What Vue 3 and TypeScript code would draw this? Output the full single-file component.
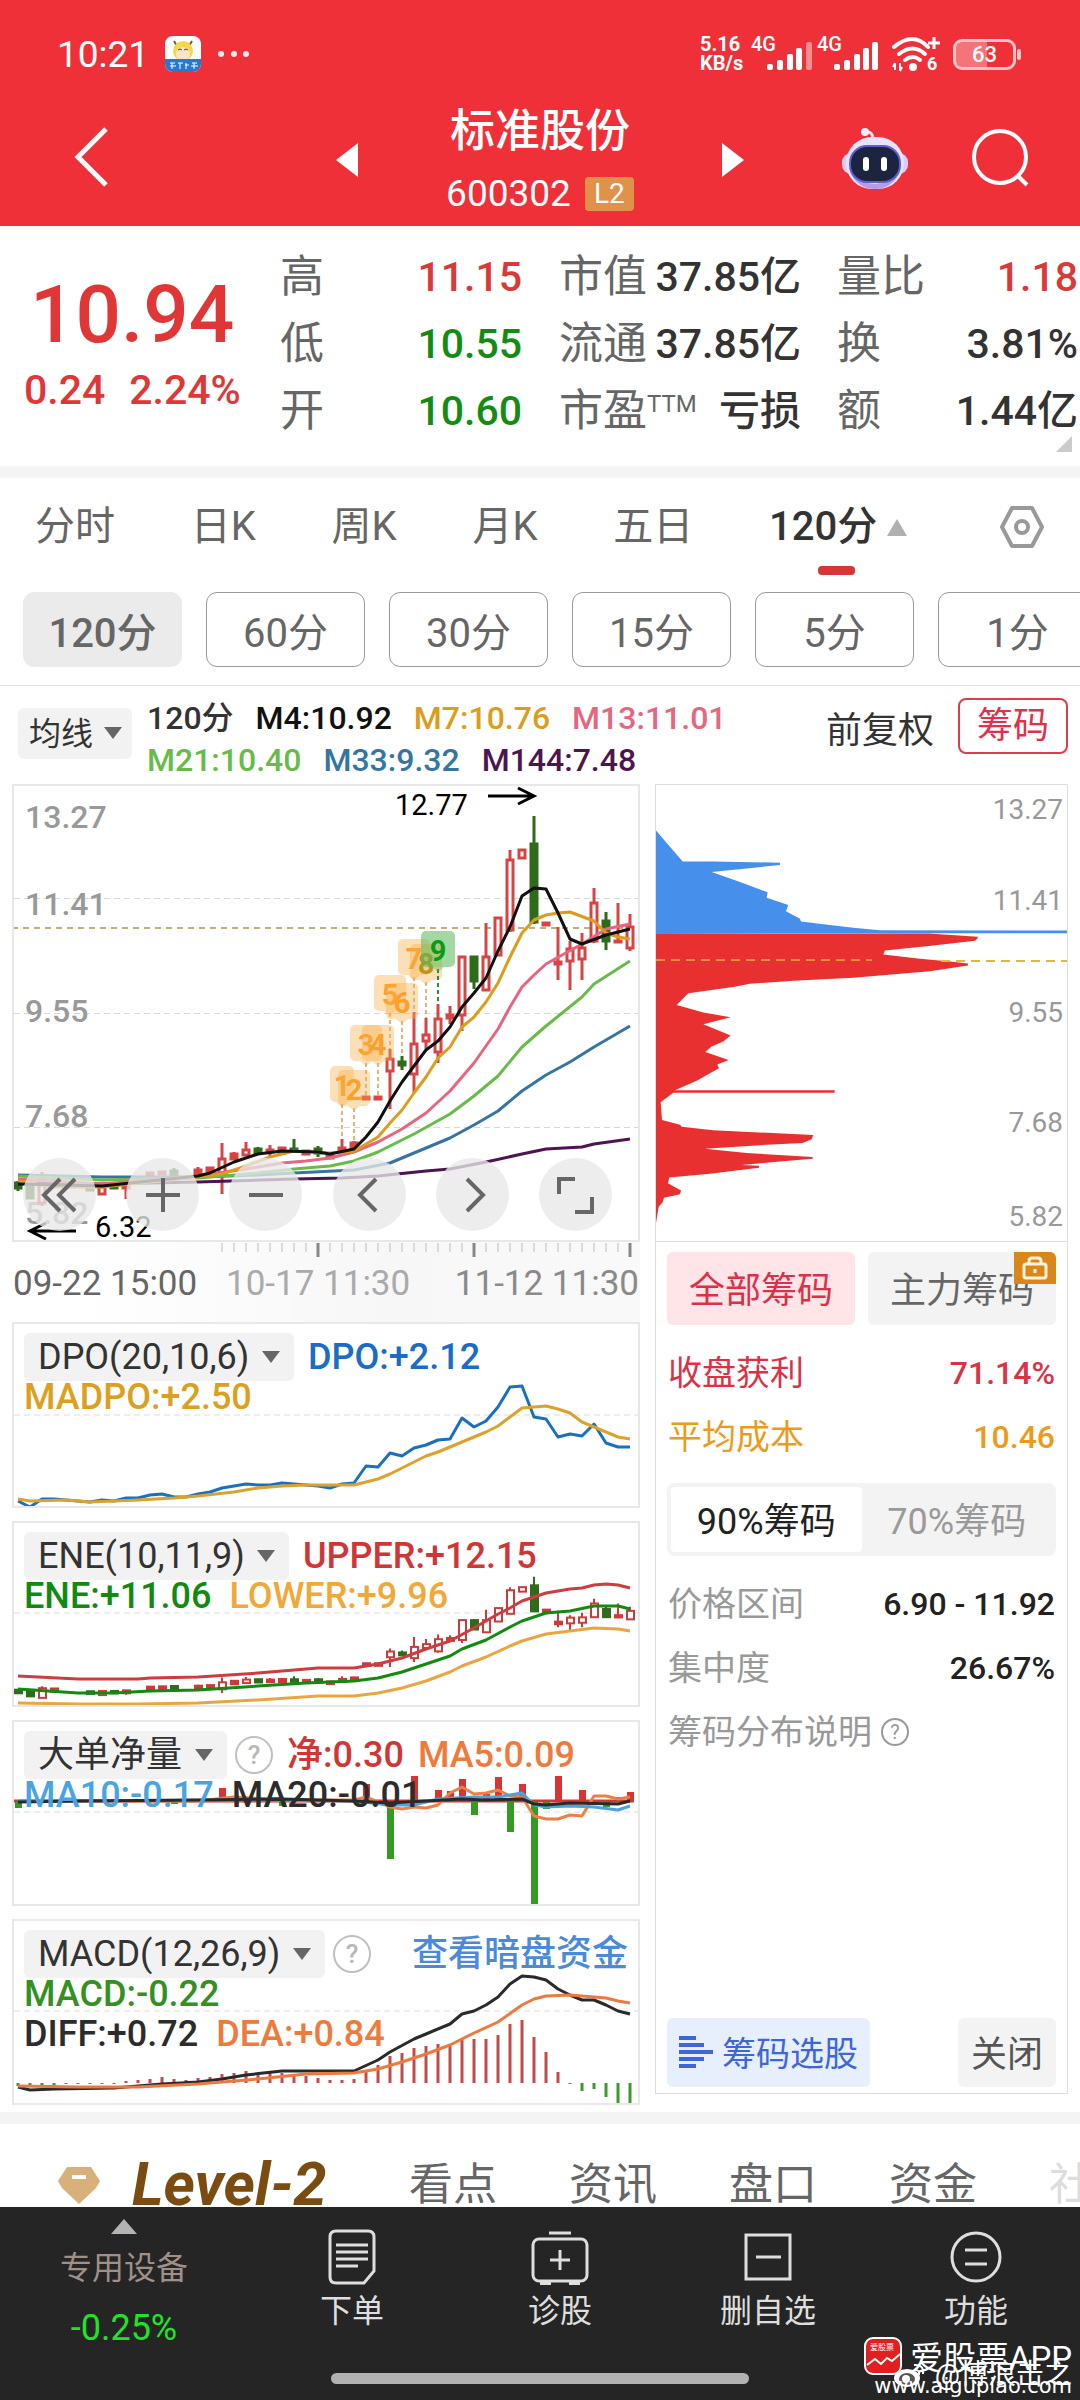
<script setup lang="ts">
type Pair = [number, number]
type Kind = 'up' | 'flat' | 'down'
// index, high, low, body top, body bottom, kind
type Candle = [number, number, number, number, number, Kind]

const slot = (i: number): number => 18 + 12 * i
const line = (pairs: Pair[]): string => pairs.map(([i, y]) => `${slot(i)},${y}`).join(' ')
const dense = (ys: number[]): string => ys.map((y, i) => `${slot(i)},${y}`).join(' ')

const quoteColumns = [
  [
    { label: '高', value: '11.15', tone: 'rise' },
    { label: '低', value: '10.55', tone: 'fall' },
    { label: '开', value: '10.60', tone: 'fall' },
  ],
  [
    { label: '市值', value: '37.85亿', tone: '' },
    { label: '流通', value: '37.85亿', tone: '' },
    { label: '市盈', sup: 'TTM', value: '亏损', tone: '' },
  ],
  [
    { label: '量比', value: '1.18', tone: 'rise' },
    { label: '换', value: '3.81%', tone: '' },
    { label: '额', value: '1.44亿', tone: '' },
  ],
]

const tabs = ['分时', '日K', '周K', '月K', '五日']
const periods = ['120分', '60分', '30分', '15分', '5分', '1分']

const averages = [
  [
    { text: '120分', color: '#333333' },
    { text: 'M4:10.92', color: '#111111' },
    { text: 'M7:10.76', color: '#dc9c1c' },
    { text: 'M13:11.01', color: '#e5667e' },
  ],
  [
    { text: 'M21:10.40', color: '#68bb4a' },
    { text: 'M33:9.32', color: '#36759f' },
    { text: 'M144:7.48', color: '#4c1450' },
  ],
]

const candles: Candle[] = [
  [0, 1181, 1191, 1183, 1188, 'down'],
  [1, 1184, 1198, 1184, 1198, 'down'],
  [2, 1172, 1206, 1178, 1203, 'up'],
  [3, 1178, 1184, 1179, 1183, 'flat'],
  [6, 1188, 1191, 1188, 1190, 'down'],
  [7, 1186, 1194, 1187, 1194, 'up'],
  [8, 1187, 1189, 1187, 1188, 'down'],
  [9, 1185, 1199, 1185, 1188, 'flat'],
  [11, 1172, 1176, 1173, 1175, 'flat'],
  [12, 1171, 1175, 1172, 1174, 'flat'],
  [13, 1168, 1175, 1171, 1175, 'down'],
  [15, 1167, 1176, 1170, 1176, 'flat'],
  [16, 1167, 1175, 1168, 1171, 'flat'],
  [17, 1143, 1194, 1159, 1175, 'up'],
  [18, 1152, 1160, 1154, 1159, 'flat'],
  [19, 1142, 1156, 1150, 1155, 'up'],
  [20, 1147, 1154, 1149, 1153, 'down'],
  [21, 1145, 1157, 1150, 1152, 'flat'],
  [22, 1147, 1153, 1148, 1153, 'flat'],
  [23, 1139, 1152, 1149, 1151, 'down'],
  [24, 1150, 1155, 1151, 1154, 'flat'],
  [25, 1146, 1157, 1149, 1153, 'down'],
  [26, 1155, 1158, 1156, 1158, 'flat'],
  [27, 1139, 1152, 1148, 1151, 'flat'],
  [28, 1141, 1149, 1143, 1148, 'flat'],
  [29, 1097, 1099, 1097, 1099, 'flat'],
  [30, 1097, 1099, 1097, 1099, 'flat'],
  [31, 1049, 1109, 1059, 1071, 'up'],
  [32, 1056, 1070, 1062, 1065, 'down'],
  [33, 1012, 1093, 1044, 1074, 'up'],
  [34, 1018, 1049, 1035, 1041, 'up'],
  [35, 1004, 1063, 1019, 1052, 'up'],
  [36, 1006, 1024, 1015, 1018, 'flat'],
  [37, 956, 1031, 957, 1015, 'up'],
  [38, 956, 989, 957, 981, 'down'],
  [39, 923, 991, 957, 990, 'up'],
  [40, 917, 956, 918, 955, 'up'],
  [41, 850, 932, 860, 930, 'up'],
  [42, 849, 859, 850, 858, 'up'],
  [43, 816, 924, 844, 922, 'down'],
  [44, 923, 925, 923, 925, 'flat'],
  [45, 927, 980, 962, 964, 'flat'],
  [46, 941, 990, 949, 961, 'up'],
  [47, 933, 980, 948, 959, 'up'],
  [48, 888, 943, 903, 941, 'up'],
  [49, 912, 950, 921, 941, 'down'],
  [50, 903, 943, 941, 942, 'flat'],
  [51, 914, 951, 927, 948, 'up'],
]
const shrink = (y: number): number => 1585 + (y - 843) * 0.308
const eneCandles: Candle[] = candles.map(([i, h, l, t, b, k]) => [i, shrink(h), shrink(l), shrink(t), shrink(b) + 2, k])

const maLines: { color: string; pairs: Pair[] }[] = [
  { color: '#4c1450', pairs: [[0, 1183], [7, 1184], [15, 1182], [23, 1179], [27, 1178], [30, 1176], [34, 1171], [36, 1169], [39, 1162], [42, 1154], [44, 1149], [47, 1147], [48, 1144], [51, 1139]] },
  { color: '#36759f', pairs: [[0, 1175], [7, 1177], [15, 1177], [20, 1175], [23, 1173], [28, 1170], [31, 1163], [33, 1153], [36, 1138], [38, 1125], [40, 1111], [42, 1091], [44, 1075], [46, 1062], [48, 1047], [51, 1026]] },
  { color: '#68bb4a', pairs: [[0, 1176], [7, 1180], [15, 1178], [20, 1173], [23, 1169], [26, 1166], [28, 1161], [30, 1152], [33, 1134], [36, 1114], [38, 1096], [40, 1076], [42, 1047], [44, 1026], [47, 997], [48, 984], [51, 961]] },
  { color: '#e5667e', pairs: [[0, 1179], [7, 1184], [15, 1176], [19, 1169], [22, 1163], [24, 1161], [26, 1158], [28, 1152], [30, 1142], [32, 1129], [34, 1113], [36, 1091], [38, 1063], [40, 1029], [41, 1007], [42, 987], [43, 975], [44, 964], [47, 944], [49, 929], [51, 924]] },
  { color: '#dc9c1c', pairs: [[0, 1181], [3, 1187], [7, 1187], [15, 1177], [17, 1174], [19, 1166], [21, 1157], [23, 1151], [26, 1153], [28, 1151], [30, 1137], [31, 1123], [32, 1110], [33, 1093], [34, 1077], [35, 1058], [36, 1047], [37, 1027], [38, 1017], [39, 1002], [40, 983], [41, 957], [42, 933], [43, 920], [44, 915], [45, 913], [46, 912], [48, 921], [49, 933], [50, 937], [51, 939]] },
  { color: '#111111', pairs: [[0, 1184], [7, 1186], [15, 1176], [16, 1173], [18, 1162], [20, 1154], [22, 1151], [25, 1152], [26, 1154], [28, 1149], [29, 1137], [30, 1122], [31, 1101], [32, 1082], [34, 1050], [35, 1041], [36, 1027], [37, 1007], [38, 993], [39, 978], [40, 951], [41, 927], [42, 896], [43, 888], [44, 889], [45, 913], [46, 939], [47, 944], [49, 935], [51, 929]] },
]

const counts = [
  { n: 1, x: 342, top: 1066, end: 1139, half: 12 },
  { n: 2, x: 354, top: 1070, end: 1141, half: 16 },
  { n: 3, x: 366, top: 1025, end: 1096, half: 16 },
  { n: 4, x: 378, top: 1025, end: 1096, half: 16 },
  { n: 5, x: 390, top: 975, end: 1049, half: 16 },
  { n: 6, x: 402, top: 983, end: 1056, half: 16 },
  { n: 7, x: 414, top: 939, end: 1012, half: 16 },
  { n: 8, x: 426, top: 944, end: 1018, half: 16 },
  { n: 9, x: 438, top: 931, end: 1004, half: 17 },
]

const priceLabels = [
  { text: '13.27', y: 828, side: 819 },
  { text: '11.41', y: 915, side: 910 },
  { text: '9.55', y: 1022, side: 1022 },
  { text: '7.68', y: 1127, side: 1132 },
  { text: '5.82', y: 1224, side: 1226 },
]

const ticks = Array.from({ length: 35 }, (_, k) => slot(17 + k))
const isMajor = (x: number): boolean => [318, 474, 630].includes(x)

const dpo = dense([1501, 1507, 1499, 1499, 1500, 1501, 1502, 1500, 1501, 1498, 1498, 1495, 1494, 1497, 1497, 1494, 1492, 1488, 1486, 1484, 1485, 1485, 1483, 1484, 1485, 1486, 1488, 1484, 1483, 1466, 1467, 1453, 1456, 1448, 1445, 1440, 1439, 1418, 1427, 1421, 1407, 1387, 1386, 1417, 1419, 1437, 1434, 1436, 1424, 1443, 1447, 1447])
const madpo = line([[0, 1499], [1, 1501], [4, 1500], [6, 1502], [10, 1500], [13, 1498], [15, 1496], [18, 1492], [20, 1488], [22, 1486], [24, 1485], [28, 1485], [29, 1482], [30, 1479], [31, 1474], [32, 1468], [33, 1462], [34, 1456], [35, 1452], [36, 1447], [37, 1442], [38, 1437], [39, 1432], [40, 1426], [41, 1417], [42, 1408], [43, 1407], [44, 1406], [45, 1409], [46, 1413], [47, 1422], [48, 1427], [49, 1432], [50, 1437], [51, 1439]])

const upper = line([[0, 1676], [5, 1679], [10, 1679], [11, 1678], [15, 1677], [20, 1673], [25, 1668], [28, 1668], [30, 1664], [32, 1658], [34, 1649], [36, 1641], [38, 1628], [40, 1614], [41, 1608], [42, 1601], [43, 1597], [44, 1593], [46, 1589], [47, 1588], [48, 1585], [49, 1584], [50, 1585], [51, 1588]])
const ene = line([[0, 1689], [5, 1693], [8, 1693], [11, 1691], [15, 1690], [20, 1686], [24, 1683], [28, 1681], [30, 1678], [32, 1672], [34, 1664], [36, 1656], [37, 1649], [39, 1640], [41, 1627], [42, 1621], [44, 1613], [46, 1611], [48, 1606], [50, 1606], [51, 1609]])
const lower = line([[0, 1703], [5, 1704], [10, 1704], [15, 1703], [20, 1700], [25, 1696], [28, 1696], [30, 1693], [32, 1688], [34, 1681], [36, 1672], [37, 1666], [39, 1657], [41, 1646], [42, 1641], [44, 1634], [46, 1631], [48, 1628], [50, 1629], [51, 1631]])

const netUp: Pair[] = [[17, 1788], [29, 1784], [33, 1776], [35, 1790], [36, 1791], [37, 1779], [39, 1794], [40, 1777], [42, 1784], [45, 1776], [47, 1790], [50, 1797], [51, 1792]]
const netDown: Pair[] = [[0, 1808], [13, 1804], [22, 1806], [31, 1859], [38, 1815], [41, 1832], [43, 1905], [44, 1809], [48, 1805], [49, 1807]]
const net5 = line([[0, 1801], [15, 1801], [18, 1797], [22, 1800], [28, 1800], [29, 1797], [31, 1807], [32, 1809], [33, 1807], [34, 1808], [35, 1805], [36, 1793], [37, 1787], [38, 1794], [39, 1793], [40, 1790], [41, 1796], [42, 1797], [43, 1816], [44, 1819], [45, 1819], [46, 1815], [47, 1816], [48, 1796], [49, 1796], [50, 1799], [51, 1797]])
const net10 = line([[0, 1801], [20, 1800], [28, 1801], [31, 1805], [33, 1805], [35, 1799], [38, 1797], [40, 1797], [42, 1793], [43, 1805], [44, 1807], [46, 1806], [48, 1807], [50, 1810], [51, 1806]])
const net20 = line([[0, 1802], [5, 1801], [15, 1800], [22, 1799], [28, 1801], [31, 1803], [34, 1801], [37, 1799], [39, 1800], [42, 1799], [43, 1804], [44, 1805], [46, 1803], [50, 1804], [51, 1801]])

const macdBars: number[] = [2086, 2087, 2086, 2086, 2084, 2084, 2084, 2084, 2084, 2081, 2080, 2079, 2077, 2079, 2080, 2078, 2077, 2074, 2073, 2071, 2074, 2073, 2073, 2076, 2076, 2078, 2080, 2080, 2079, 2072, 2065, 2056, 2053, 2048, 2046, 2044, 2045, 2038, 2039, 2039, 2035, 2024, 2020, 2037, 2052, 2072, 2084, 2091, 2089, 2097, 2104, 2104]
const diff = line([[0, 2087], [1, 2090], [3, 2089], [8, 2088], [10, 2086], [12, 2084], [15, 2082], [17, 2079], [19, 2075], [22, 2071], [28, 2071], [30, 2060], [31, 2052], [33, 2039], [34, 2034], [36, 2024], [37, 2014], [38, 2011], [39, 2005], [40, 1997], [41, 1984], [42, 1976], [43, 1977], [44, 1980], [45, 1989], [46, 1995], [47, 2000], [48, 2000], [49, 2005], [50, 2011], [51, 2014]])
const dea = line([[0, 2086], [5, 2087], [10, 2087], [15, 2084], [20, 2079], [24, 2074], [28, 2073], [30, 2069], [32, 2062], [34, 2054], [36, 2045], [38, 2033], [40, 2022], [42, 2005], [43, 1999], [44, 1996], [46, 1995], [48, 1997], [49, 1998], [50, 2001], [51, 2003]])

const sections = ['看点', '资讯', '盘口', '资金', '社区']
</script>

<template>
  <div class="app">
    <header class="top">
      <div class="status">
        <span class="clock">10:21</span>
        <svg class="appicon" viewBox="0 0 36 36" width="36" height="36">
          <rect width="36" height="36" rx="8" fill="#fff" />
          <path d="M9 5l3 5M27 5l-3 5" stroke="#7a5a20" stroke-width="2" />
          <circle cx="18" cy="15" r="10" fill="#f3d84a" />
          <ellipse cx="18" cy="18" rx="7" ry="7" fill="#fbe3c4" />
          <path d="M13 14q2-2 4 0M19 14q2-2 4 0" stroke="#444" fill="none" />
          <path d="M0 23h36v5a8 8 0 0 1-8 8H8a8 8 0 0 1-8-8z" fill="#2878d0" />
          <path d="M5 27h5M7 27v6M5 30h6M13 27h5M15 27v6M21 27v6M20 29h4M27 27h5M29 27v6M26 30h7" stroke="#fff" />
        </svg>
        <svg class="dots" viewBox="0 0 34 8" width="34" height="8"><g fill="#ffe9e9"><circle cx="4" cy="4" r="3" /><circle cx="17" cy="4" r="3" /><circle cx="29" cy="4" r="3" /></g></svg>
        <span class="speed">5.16<br />KB/s</span>
        <svg class="signals" viewBox="0 -4 128 44" width="128" height="44">
          <text x="0" y="15" class="sig">4G</text>
          <text x="66" y="15" class="sig">4G</text>
          <g fill="#fff">
            <rect x="16" y="28" width="6" height="6" rx="2" /><rect x="26" y="24" width="6" height="10" rx="2" /><rect x="36" y="18" width="6" height="16" rx="2" /><rect x="45" y="12" width="6" height="22" rx="2" /><rect x="55" y="6" width="6" height="28" rx="2" opacity=".45" />
            <rect x="83" y="28" width="6" height="6" rx="2" /><rect x="93" y="24" width="6" height="10" rx="2" /><rect x="103" y="18" width="6" height="16" rx="2" /><rect x="112" y="12" width="6" height="22" rx="2" /><rect x="121" y="6" width="6" height="28" rx="2" />
          </g>
        </svg>
        <svg class="wifi" viewBox="0 -4 50 44" width="50" height="44">
          <g fill="none" stroke="#fff" stroke-width="4" stroke-linecap="round"><path d="M3 11q19-16 34 0" /><path d="M8 18q14-11 26 0" /><path d="M14 24q8-6 15 0" /></g>
          <circle cx="22" cy="31" r="4" fill="#fff" />
          <path d="M37 7h12M43 1v12" stroke="#fff" stroke-width="3" />
          <path d="M4 34v-7M9 27v8M2 31l2-4M11 31l-2 4" stroke="#fff" stroke-width="2" />
          <text x="36" y="34" class="wifi-six">6</text>
        </svg>
        <span class="battery"><span>63</span></span>
      </div>
      <div class="nav">
        <button class="icon back" aria-label="返回"><svg viewBox="0 0 36 62" width="36" height="62"><path d="M32 3L4 31l28 28" fill="none" stroke="#fff" stroke-width="5" /></svg></button>
        <div class="title">
          <button class="icon" aria-label="上一只"><svg viewBox="0 0 22 34" width="22" height="34"><path d="M22 0v34L0 17z" fill="#fff" /></svg></button>
          <div class="names">
            <h1>标准股份</h1>
            <div class="code">600302 <span class="l2">L2</span></div>
          </div>
          <button class="icon" aria-label="下一只"><svg viewBox="0 0 22 34" width="22" height="34"><path d="M0 0v34l22-17z" fill="#fff" /></svg></button>
        </div>
        <div class="nav-end">
          <button class="icon" aria-label="智能助手">
            <svg viewBox="0 0 66 62" width="66" height="62">
              <path d="M22 4q9-2 9 8" fill="none" stroke="#f0dcf0" stroke-width="3" /><circle cx="23" cy="4" r="4" fill="#f6ecff" />
              <rect x="0" y="25" width="66" height="21" rx="9" fill="#d9cdf8" />
              <rect x="4" y="9" width="58" height="52" rx="26" fill="#e8e2fc" />
              <path d="M8 44q25 24 50 0q-8 17-25 17T8 44z" fill="#b79be8" />
              <rect x="8" y="18" width="50" height="36" rx="17" fill="#1c2440" stroke="#5a5fd0" stroke-width="2" />
              <rect x="21" y="29" width="6" height="14" rx="3" fill="#fff" /><rect x="39" y="29" width="6" height="14" rx="3" fill="#fff" />
            </svg>
          </button>
          <button class="icon" aria-label="搜索"><svg viewBox="0 0 60 60" width="60" height="60"><circle cx="29" cy="29" r="26" fill="none" stroke="#fff" stroke-width="4" /><path d="M47 48l9 9" stroke="#fff" stroke-width="4" /></svg></button>
        </div>
      </div>
    </header>

    <main class="content">
      <section class="quote">
        <div class="price">
          <strong>10.94</strong>
          <div class="change"><span>0.24</span><span>2.24%</span></div>
        </div>
        <dl v-for="(col, c) in quoteColumns" :key="c">
          <div v-for="q in col" :key="q.label">
            <dt>{{ q.label }}<sup v-if="q.sup">{{ q.sup }}</sup></dt>
            <dd :class="q.tone">{{ q.value }}</dd>
          </div>
        </dl>
        <svg class="corner" viewBox="0 0 16 16" width="16" height="16"><path d="M16 0v16H0z" fill="#ccc" /></svg>
      </section>

      <nav class="tabs">
        <button v-for="t in tabs" :key="t">{{ t }}</button>
        <button class="active">120分<svg viewBox="0 0 20 17" width="20" height="17"><path d="M10 0l10 17H0z" fill="#b0b0b0" /></svg></button>
        <button class="gear" aria-label="设置"><svg viewBox="0 0 46 44" width="46" height="44"><path d="M13 3h20l10 19-10 19H13L3 22z" fill="none" stroke="#999" stroke-width="4" stroke-linejoin="round" /><circle cx="23" cy="22" r="6" fill="none" stroke="#999" stroke-width="4" /></svg></button>
      </nav>

      <div class="periods">
        <button v-for="(p, k) in periods" :key="p" :class="{ on: k === 0 }">{{ p }}</button>
      </div>

      <div class="legend">
        <div class="pick"><select aria-label="均线"><option>均线</option></select></div>
        <div class="averages">
          <div v-for="(row, r) in averages" :key="r"><span v-for="m in row" :key="m.text" :style="{ color: m.color }">{{ m.text }}</span></div>
        </div>
        <button class="adjust">前复权</button>
        <button class="chips-btn">筹码</button>
      </div>

      <section class="board">
        <div class="left">
          <div class="frame main-chart">
            <svg viewBox="14 786 624 454">
              <g stroke="#d8d8d8" stroke-width="1" stroke-dasharray="6 4"><path d="M14 898.5H638M14 1013.5H638M14 1127.5H638" /></g>
              <path d="M12 928H638" stroke="#c0b07c" stroke-width="2" stroke-dasharray="6 5" />
              <text v-for="p in priceLabels" :key="p.text" x="25" :y="p.y" class="axis">{{ p.text }}</text>
              <g v-for="c in candles" :key="c[0]" :stroke="c[5] === 'down' ? '#2f6b1a' : '#d64545'" stroke-width="3">
                <path :d="`M${slot(c[0])} ${c[1]}V${c[3]}M${slot(c[0])} ${c[4]}V${c[2]}`" />
                <rect :x="slot(c[0]) - 3" :y="c[3]" width="6" :height="c[4] - c[3]" :fill="c[5] === 'up' ? '#fff' : c[5] === 'down' ? '#2f6b1a' : '#d64545'" />
              </g>
              <polyline v-for="m in maLines" :key="m.color" :points="line(m.pairs)" class="curve" :stroke="m.color" />
              <g v-for="b in counts" :key="b.n">
                <path :d="`M${b.x} ${b.top + 38}V${b.end}`" :stroke="b.n === 9 ? '#2c8a3a' : '#dcb878'" stroke-width="2" stroke-dasharray="4 3" />
                <rect :x="b.x - b.half" :y="b.top" :width="b.half * 2" height="36" rx="5" :fill="b.n === 9 ? '#58b858' : '#fbb04c'" :opacity="b.n === 9 ? 0.55 : 0.4" />
                <path :d="`M${b.x - 6} ${b.top + 36}h12l-6 5z`" :fill="b.n === 9 ? '#58b858' : '#fbb04c'" opacity=".4" />
                <text :x="b.x" :y="b.top + 30" text-anchor="middle" class="count" :fill="b.n === 9 ? '#0a9a14' : b.n === 8 ? '#b8961c' : '#f9a12a'">{{ b.n }}</text>
              </g>
              <text x="395" y="815" class="mark">12.77</text>
              <path d="M488 796h46M518 788l16 8-16 8" fill="none" stroke="#000" stroke-width="3" />
              <text x="95" y="1237" class="mark">6.32</text>
              <path d="M76 1231H30M46 1223l-16 8 16 8" fill="none" stroke="#000" stroke-width="3" />
            </svg>
            <div class="tools">
              <button aria-label="最早"><svg viewBox="0 0 40 40"><path d="M20 4L4 20l16 16M35 4L19 20l16 16" /></svg></button>
              <button aria-label="放大"><svg viewBox="0 0 40 40"><path d="M3 20h34M20 3v34" /></svg></button>
              <button aria-label="缩小"><svg viewBox="0 0 40 40"><path d="M3 20h34" /></svg></button>
              <button aria-label="左移"><svg viewBox="0 0 40 40"><path d="M27 4L11 20l16 16" /></svg></button>
              <button aria-label="右移"><svg viewBox="0 0 40 40"><path d="M15 4l16 16-16 16" /></svg></button>
              <button aria-label="全屏"><svg viewBox="0 0 40 40"><path d="M4 19V4h16M20 37h17V22" /></svg></button>
            </div>
          </div>

          <svg class="timeline" viewBox="12 1241 628 80">
            <path v-for="x in ticks" :key="x" :d="`M${x} 1242V${isMajor(x) ? 1256 : 1251}`" :stroke="isMajor(x) ? '#888' : '#bbb'" :stroke-width="isMajor(x) ? 3 : 1" />
            <text x="13" y="1294" fill="#666">09-22 15:00</text>
            <text x="226" y="1294" fill="#aaa">10-17 11:30</text>
            <text x="639" y="1294" text-anchor="end" fill="#8a8a8a">11-12 11:30</text>
          </svg>

          <div class="frame sub">
            <svg viewBox="14 1324 624 182">
              <path d="M14 1415H638" class="mid" />
              <polyline :points="dpo" stroke="#1a6fc0" class="curve" />
              <polyline :points="madpo" stroke="#dba22e" class="curve" />
            </svg>
            <div class="info">
              <div class="row head"><div class="pick"><select aria-label="指标 DPO"><option>DPO(20,10,6)</option></select></div><span class="blue">DPO:+2.12</span></div>
              <div class="row"><span class="gold">MADPO:+2.50</span></div>
            </div>
          </div>

          <div class="frame sub">
            <svg viewBox="14 1523 624 182">
              <path d="M14 1613H638" class="mid" />
              <g v-for="c in eneCandles" :key="c[0]" :stroke="c[5] === 'down' ? '#2f6b1a' : '#cc3a3a'" stroke-width="2">
                <path :d="`M${slot(c[0])} ${c[1]}V${c[3]}M${slot(c[0])} ${c[4]}V${c[2]}`" />
                <rect :x="slot(c[0]) - 3" :y="c[3]" width="7" :height="c[4] - c[3]" :fill="c[5] === 'up' ? '#fff' : c[5] === 'down' ? '#2f6b1a' : '#cc3a3a'" />
              </g>
              <polyline :points="upper" stroke="#cc3c40" class="curve" />
              <polyline :points="ene" stroke="#128a12" class="curve" />
              <polyline :points="lower" stroke="#e8a640" class="curve" />
            </svg>
            <div class="info">
              <div class="row head"><div class="pick"><select aria-label="指标 ENE"><option>ENE(10,11,9)</option></select></div><span class="red">UPPER:+12.15</span></div>
              <div class="row"><span class="green">ENE:+11.06</span><span class="amber">LOWER:+9.96</span></div>
            </div>
          </div>

          <div class="frame sub">
            <svg viewBox="14 1722 624 182">
              <path d="M14 1812H638" class="mid" />
              <path d="M14 1801H634" stroke="#d83434" stroke-width="3" />
              <rect v-for="b in netUp" :key="b[0]" :x="slot(b[0]) - 3" :y="b[1]" width="7" :height="1802 - b[1]" fill="#d83434" />
              <rect v-for="b in netDown" :key="b[0]" :x="slot(b[0]) - 3" y="1802" width="7" :height="b[1] - 1802" fill="#349a22" />
              <polyline :points="net5" stroke="#ec8048" class="curve" />
              <polyline :points="net10" stroke="#4da3dc" class="curve" />
              <polyline :points="net20" stroke="#2a2a2a" class="curve" />
            </svg>
            <div class="info">
              <div class="row head"><div class="pick"><select aria-label="指标 大单净量"><option>大单净量</option></select></div><button class="help" aria-label="说明">?</button><span class="red">净:0.30</span><span class="orange">MA5:0.09</span></div>
              <div class="row"><span class="sky">MA10:-0.17</span><span class="ink">MA20:-0.01</span></div>
            </div>
          </div>

          <div class="frame sub">
            <svg viewBox="14 1921 624 182">
              <path d="M14 2011H638" class="mid" />
              <path v-for="(y, i) in macdBars" :key="i" :d="`M${slot(i)} 2083V${y}`" :stroke="y > 2083 ? '#3a9a2a' : '#c44a4a'" stroke-width="3" />
              <polyline :points="diff" stroke="#2a2a2a" class="curve" />
              <polyline :points="dea" stroke="#ec7a40" class="curve" />
            </svg>
            <div class="info">
              <div class="row head"><div class="pick"><select aria-label="指标 MACD"><option>MACD(12,26,9)</option></select></div><button class="help" aria-label="说明">?</button><a href="#dark" class="more">查看暗盘资金</a></div>
              <div class="row"><span class="leaf">MACD:-0.22</span></div>
              <div class="row"><span class="ink">DIFF:+0.72</span><span class="orange">DEA:+0.84</span></div>
            </div>
          </div>
        </div>

        <aside class="right">
          <svg class="spread" viewBox="656 785 411 456">
            <g transform="translate(640 770) scale(0.3333 0.3444)">
              <polygon fill="#468fea" points="48,176 128,266 220,266 420,269 420,276 215,296 300,325 383,355 380,371 445,392 438,410 480,432 483,440 550,448 640,458 720,465 1281,466 1281,474 48,474" />
              <polygon fill="#e93030" points="48,474 865,475 1014,484 1012,490 1005,496 860,512 735,524 730,536 840,548 930,556 984,562 984,568 870,584 640,603 460,612 330,621 280,630 145,648 110,682 190,704 272,718 190,738 272,771 250,788 215,803 196,819 266,842 232,855 237,866 170,902 105,930 584,930 584,937 100,937 62,965 66,1016 120,1030 125,1036 220,1046 520,1060 515,1072 488,1083 380,1088 195,1100 320,1112 518,1124 518,1129 385,1140 305,1147 357,1149 357,1155 210,1172 88,1183 84,1200 123,1221 120,1232 72,1242 68,1255 56,1268 48,1315" />
            </g>
            <path d="M656 960H872" stroke="#f08c3c" stroke-width="2" stroke-dasharray="9 6" />
            <path d="M941 961H1067" stroke="#e0b83c" stroke-width="2" stroke-dasharray="9 6" />
            <text v-for="p in priceLabels" :key="p.text" x="1063" :y="p.side" text-anchor="end">{{ p.text }}</text>
          </svg>
          <div class="detail">
            <div class="scope">
              <button class="on">全部筹码</button>
              <button>主力筹码<span class="lock"><svg viewBox="0 0 42 32" width="42" height="32"><rect x="10" y="12" width="22" height="14" rx="2" fill="none" stroke="#fff3dc" stroke-width="3" /><path d="M15 12V9q0-3 3-3h6q3 0 3 3v3M21 17v4" fill="none" stroke="#fff3dc" stroke-width="3" /></svg></span></button>
            </div>
            <dl class="facts">
              <div class="rose"><dt>收盘获利</dt><dd>71.14%</dd></div>
              <div class="honey"><dt>平均成本</dt><dd>10.46</dd></div>
            </dl>
            <div class="toggle"><button class="on">90%筹码</button><button>70%筹码</button></div>
            <dl class="facts">
              <div><dt>价格区间</dt><dd>6.90 - 11.92</dd></div>
              <div><dt>集中度</dt><dd>26.67%</dd></div>
              <div><dt>筹码分布说明 <button class="help small" aria-label="说明">?</button></dt></div>
            </dl>
            <div class="actions">
              <button class="choose"><svg viewBox="0 0 34 32" width="34" height="32"><path d="M0 2h17M0 9h25M0 16h34M0 23h25M0 30h17" stroke="#3f66d8" stroke-width="4" /></svg>筹码选股</button>
              <button class="close">关闭</button>
            </div>
          </div>
        </aside>
      </section>

      <nav class="sections">
        <a href="#level2" class="level"><svg viewBox="0 0 42 37" width="42" height="37"><path d="M9 0h24l9 14-4 7-17 16L4 21l-4-7z" fill="#d8b07a" /><rect x="14" y="8" width="14" height="4" fill="#fff" /></svg><em>Level-2</em></a>
        <a v-for="s in sections" :key="s" href="#section">{{ s }}</a>
      </nav>
    </main>

    <footer class="bottom">
      <div class="bar">
        <button class="device"><svg viewBox="0 0 26 15" width="26" height="15"><path d="M13 0l13 15H0z" fill="#b4b4b4" /></svg><span>专用设备</span><b>-0.25%</b></button>
        <button><svg viewBox="0 0 60 56" width="60" height="56"><g fill="none" stroke="#dedede" stroke-width="3"><path d="M14 2h32q6 0 6 6v34L42 54H14q-6 0-6-6V8q0-6 6-6z" /><path d="M14 16h32M14 23h32M14 30h32M14 37h22" /></g></svg>下单</button>
        <button><svg viewBox="0 0 60 56" width="60" height="56"><g fill="none" stroke="#dedede" stroke-width="3"><rect x="3" y="10" width="54" height="42" rx="6" /><path d="M19 4h22M30 21v20M20 31h20" /><path d="M10 54h11M39 54h11" stroke-width="4" /></g></svg>诊股</button>
        <button><svg viewBox="0 0 60 56" width="60" height="56"><g fill="none" stroke="#dedede" stroke-width="3"><rect x="8" y="6" width="44" height="44" /><path d="M18 28h25" /></g></svg>删自选</button>
        <button><svg viewBox="0 0 60 56" width="60" height="56"><g fill="none" stroke="#dedede" stroke-width="3"><circle cx="30" cy="28" r="24" /><path d="M19 21h22M19 35h22" /></g></svg>功能</button>
      </div>
      <div class="home"></div>
      <div class="stamp">
        <div class="brand">
          <svg viewBox="0 0 38 38" width="38" height="38"><rect x="1" y="1" width="36" height="36" rx="8" fill="#e02020" stroke="#fff" stroke-width="2" /><text x="6" y="13" class="brand-mini">爱股票</text><path d="M3 28l8-6 6 5 6-6 5 3 8-7" fill="none" stroke="#fff" stroke-width="2" /></svg>
          <span>爱股票APP</span>
        </div>
        <div class="user">
          <svg viewBox="0 0 34 26" width="34" height="26"><ellipse cx="14" cy="16" rx="13" ry="9" fill="#fff" /><ellipse cx="14" cy="17" rx="8" ry="6" fill="#555" /><circle cx="13" cy="17" r="4" fill="#fff" /><path d="M21 3q10-1 9 9M22 8q5 0 4 5" fill="none" stroke="#fff" stroke-width="2" /></svg>
          <span>@博浪击之</span>
        </div>
        <div class="site">www.aigupiao.com</div>
      </div>
    </footer>
  </div>
</template>

<style>
body {
  margin: 0;
  background: #fff;
}
</style>

<style scoped>
.app {
  display: flex;
  flex-direction: column;
  height: 100vh;
  overflow: hidden;
  font-family: Roboto, "Noto Sans CJK SC", sans-serif;
  color: #333;
}
button {
  padding: 0;
  border: 0;
  background: none;
  font: inherit;
  color: inherit;
}
svg {
  display: block;
  flex: none;
}
a {
  color: inherit;
  text-decoration: none;
}
dl,
dd,
h1 {
  margin: 0;
}

/* header */
.top {
  flex: none;
  height: 226px;
  background: #f03038;
  color: #fff;
}
.status {
  display: flex;
  align-items: center;
  height: 36px;
  padding: 36px 64px 0 57px;
}
.clock {
  width: 108px;
  font-size: 37px;
}
.dots {
  margin-left: 16px;
}
.speed {
  margin-left: auto;
  width: 51px;
  font-size: 20px;
  line-height: 19px;
  font-weight: 700;
}
.sig {
  font-size: 20px;
  font-weight: 500;
  fill: #fff;
}
.wifi {
  margin-left: 12px;
}
.wifi-six {
  font-size: 18px;
  font-weight: 700;
  fill: #fff;
}
.battery {
  position: relative;
  margin-left: 12px;
  width: 63px;
  height: 31px;
  box-sizing: border-box;
  border: 3px solid #fbc4c6;
  border-radius: 9px;
  background: linear-gradient(90deg, #f4747a 55%, transparent 55%);
  text-align: center;
  font-size: 22px;
  line-height: 25px;
  font-weight: 500;
}
.battery::after {
  content: "";
  position: absolute;
  right: -8px;
  top: 7px;
  width: 4px;
  height: 11px;
  border-radius: 2px;
  background: #fbc4c6;
}
.nav {
  display: grid;
  grid-template-columns: 1fr 408px 1fr;
  height: 154px;
}
.icon {
  display: block;
}
.back {
  justify-self: start;
  height: 62px;
  margin: 54px 0 0 74px;
}
.title {
  display: flex;
  align-items: flex-start;
  justify-content: space-between;
}
.title .icon {
  margin-top: 71px;
}
.names {
  display: flex;
  flex-direction: column;
  align-items: center;
  padding-top: 32px;
}
h1 {
  font-size: 45px;
  line-height: 56px;
  font-weight: 500;
}
.code {
  display: flex;
  align-items: center;
  gap: 14px;
  margin-top: 16px;
  font-size: 37px;
  line-height: 36px;
}
.l2 {
  width: 49px;
  height: 34px;
  border-radius: 4px;
  background: #e0914a;
  text-align: center;
  font-size: 28px;
  line-height: 34px;
}
.nav-end {
  display: flex;
  justify-content: flex-end;
  align-items: flex-start;
  gap: 63px;
  padding: 56px 49px 0 0;
}

/* quote */
.content {
  flex: 1;
  min-height: 0;
  overflow: hidden;
}
.quote {
  position: relative;
  display: grid;
  grid-template-columns: 256px 242px 37px 242px 36px 1fr;
  height: 240px;
  padding: 18px 2px 0 24px;
  box-sizing: border-box;
}
.quote dl:nth-of-type(2) {
  grid-column: 4;
}
.quote dl:nth-of-type(3) {
  grid-column: 6;
}
.price {
  color: #e03636;
}
.price strong {
  display: block;
  margin: 32px 0 0 6px;
  font-size: 80px;
  line-height: 78px;
  font-weight: 500;
}
.change {
  display: flex;
  gap: 24px;
  margin-top: 12px;
  font-size: 41px;
  line-height: 48px;
  font-weight: 500;
}
.quote dl > div {
  display: flex;
  justify-content: space-between;
  height: 67px;
  line-height: 67px;
}
.quote dt {
  font-size: 44px;
  color: #666;
  white-space: nowrap;
}
.quote sup {
  font-size: 24px;
  line-height: 24px;
  vertical-align: 14px;
}
.quote dd {
  font-size: 41px;
  font-weight: 500;
  white-space: nowrap;
}
.rise {
  color: #d83a3a;
}
.fall {
  color: #148c14;
}
.corner {
  position: absolute;
  right: 8px;
  bottom: 14px;
}

/* tabs */
.tabs {
  display: flex;
  align-items: center;
  justify-content: space-between;
  height: 110px;
  padding: 0 35px;
  border-top: 12px solid #f4f4f4;
  box-sizing: border-box;
  font-size: 40px;
  line-height: 98px;
  color: #666;
}
.tabs .active {
  position: relative;
  display: flex;
  align-items: center;
  gap: 10px;
  font-weight: 500;
  color: #333;
}
.tabs .active::after {
  content: "";
  position: absolute;
  left: 49px;
  bottom: 1px;
  width: 37px;
  height: 9px;
  border-radius: 4px;
  background: #d83636;
}
.gear {
  margin-left: 16px;
}
.periods {
  display: flex;
  gap: 24px;
  padding: 16px 0 18px 23px;
  border-bottom: 1px solid #e0e0e0;
  overflow: hidden;
  font-size: 40px;
  color: #666;
}
.periods button {
  flex: none;
  width: 159px;
  height: 75px;
  box-sizing: border-box;
  border: 1px solid #999;
  border-radius: 11px;
}
.periods .on {
  border-color: #ebebeb;
  background: #ebebeb;
  font-weight: 500;
}

/* moving-average legend */
.pick {
  position: relative;
  display: flex;
}
.pick select {
  appearance: none;
  height: 48px;
  margin: 0;
  padding: 0 44px 0 14px;
  border: 0;
  border-radius: 6px;
  background: #f2f2f2;
  font: inherit;
  color: #333;
}
.pick::after {
  content: "";
  position: absolute;
  right: 14px;
  top: 18px;
  border: 9px solid transparent;
  border-top: 12px solid #666;
  border-bottom: 0;
  pointer-events: none;
}
.legend {
  display: flex;
  align-items: flex-start;
  height: 98px;
  padding: 11px 12px 0 18px;
  box-sizing: border-box;
  font-size: 32px;
}
.legend .pick {
  margin-top: 11px;
}
.legend .pick select {
  height: 51px;
  padding: 0 38px 0 11px;
}
.legend .pick::after {
  right: 10px;
  top: 19px;
}
.averages {
  margin-left: 15px;
  line-height: 42px;
  font-weight: 500;
}
.averages > div {
  display: flex;
  gap: 22px;
  white-space: nowrap;
}
.adjust {
  margin: 10px 24px 0 auto;
  font-size: 36px;
  line-height: 48px;
}
.chips-btn {
  margin-top: 1px;
  width: 110px;
  height: 56px;
  border: 2px solid #dc3c4c;
  border-radius: 8px;
  font-size: 36px;
  line-height: 50px;
  color: #e0304a;
}

/* charts */
.board {
  display: grid;
  grid-template-columns: 628fr 413fr;
  column-gap: 15px;
  padding: 0 12px 7px;
}
.left {
  min-width: 0;
}
.frame {
  position: relative;
  display: grid;
  border: 2px solid #e8e8e8;
}
.frame > * {
  grid-area: 1 / 1;
  min-width: 0;
}
.frame > svg {
  width: 100%;
}
.axis {
  font-size: 32px;
  font-weight: 500;
  fill: #999;
}
.mark {
  font-size: 29px;
  fill: #000;
}
.count {
  font-size: 29px;
  font-weight: 700;
}
.tools {
  align-self: end;
  display: flex;
  justify-content: space-between;
  padding: 0 26px 9px 9px;
}
.tools button {
  display: flex;
  align-items: center;
  justify-content: center;
  width: 73px;
  height: 73px;
  border-radius: 50%;
  background: rgba(232, 232, 232, 0.78);
}
.tools svg {
  width: 40px;
  height: 40px;
  fill: none;
  stroke: #666;
  stroke-width: 4;
}
.timeline {
  width: 100%;
  background: linear-gradient(90deg, #fff 10%, #f7f7f7 60%, #f9f9f9);
}
.timeline text {
  font-size: 35px;
}
.sub + .sub {
  margin-top: 13px;
}
.mid {
  stroke: #dcdcdc;
  stroke-width: 1;
  stroke-dasharray: 6 4;
}
.curve {
  fill: none;
  stroke-width: 3;
  stroke-linejoin: round;
}
.info {
  padding: 9px 10px 0;
  font-size: 36px;
  font-weight: 500;
}
.row {
  display: flex;
  gap: 18px;
  line-height: 40px;
  white-space: nowrap;
}
.head {
  align-items: center;
  gap: 14px;
  height: 48px;
  margin-bottom: -4px;
}
.pick select {
  font-weight: 400;
}
.head .help {
  margin: 0 0 0 -6px;
}
.help {
  flex: none;
  width: 38px;
  height: 38px;
  box-sizing: border-box;
  border: 2px solid #c0c0c0;
  border-radius: 50%;
  font-size: 26px;
  line-height: 34px;
  text-align: center;
  color: #b8b8b8;
}
.more {
  margin-left: auto;
  color: #4a8ad8;
}
.blue { color: #1a6cc4; }
.gold { color: #dca01e; }
.red { color: #d03636; }
.green { color: #128a12; }
.amber { color: #f0a838; }
.orange { color: #ee7a3c; }
.sky { color: #4aa4e0; }
.ink { color: #2c2c2c; }
.leaf { color: #349022; }

/* chip distribution */
.right {
  display: flex;
  flex-direction: column;
  margin-bottom: 11px;
  border: 1px solid #ddd;
}
.spread {
  width: 100%;
  border-bottom: 1px solid #ddd;
}
.spread text {
  font-size: 28px;
  fill: #999;
}
.detail {
  flex: 1;
  display: flex;
  flex-direction: column;
  padding: 10px 11px 6px;
}
.scope {
  display: grid;
  grid-template-columns: 1fr 1fr;
  gap: 13px;
  font-size: 36px;
}
.scope button {
  position: relative;
  height: 73px;
  padding-bottom: 3px;
  border-radius: 6px;
  background: #f3f3f3;
  color: #666;
}
.scope .on {
  background: #ffe5e8;
  color: #dc3048;
}
.lock {
  position: absolute;
  right: 0;
  top: 0;
  border-radius: 0 6px 0 0;
  background: #d9861a;
}
.facts {
  padding: 0 1px;
  margin-top: 16px;
}
.facts > div {
  display: flex;
  justify-content: space-between;
  height: 64px;
  line-height: 64px;
}
.facts dt {
  display: flex;
  align-items: center;
  gap: 9px;
  font-size: 34px;
  color: #999;
}
.facts dd {
  font-size: 32px;
  font-weight: 500;
  color: #222;
}
.facts .rose > * {
  color: #dc3044;
}
.facts .honey > * {
  color: #ec9a1c;
}
.small {
  width: 28px;
  height: 28px;
  border-color: #999;
  font-size: 20px;
  line-height: 24px;
  color: #999;
}
.toggle {
  display: grid;
  grid-template-columns: 1fr 1fr;
  height: 73px;
  margin-top: 14px;
  padding: 4px;
  box-sizing: border-box;
  border-radius: 8px;
  background: #f3f3f3;
  font-size: 36px;
  color: #999;
}
.toggle button {
  padding-bottom: 4px;
}
.toggle .on {
  border-radius: 4px;
  background: #fff;
  color: #222;
}
.actions {
  display: flex;
  justify-content: space-between;
  margin-top: auto;
  font-size: 34px;
}
.actions button {
  height: 69px;
  padding-bottom: 4px;
  border-radius: 6px;
}
.actions .choose {
  display: flex;
  align-items: center;
  gap: 9px;
  padding: 0 12px 2px;
  background: #e7eefc;
  color: #3f66d8;
}
.close {
  width: 98px;
  background: #f3f3f3;
  color: #555;
  font-size: 36px;
}

/* section links */
.sections {
  display: flex;
  gap: 72px;
  border-top: 12px solid #f4f4f4;
  padding: 31px 0 40px 58px;
  overflow: hidden;
  font-size: 44px;
  line-height: 60px;
  color: #666;
  white-space: nowrap;
}
.sections a {
  flex: none;
}
.sections a:last-child {
  color: #ddd;
}
.level {
  display: flex;
  align-items: center;
  gap: 32px;
  width: 279px;
  color: #7a4c12;
}
.level em {
  font-size: 60px;
  font-weight: 700;
  line-height: 60px;
}

/* bottom bar */
.bottom {
  position: relative;
  flex: none;
  height: 193px;
  background: #252525;
  color: #dedede;
}
.bar {
  display: grid;
  grid-template-columns: 248fr 208fr 208fr 208fr 208fr;
  height: 166px;
  font-size: 32px;
}
.bar button {
  display: flex;
  flex-direction: column;
  align-items: center;
  gap: 4px;
  padding-top: 22px;
  line-height: 44px;
}
.bar .device {
  gap: 10px;
  padding-top: 12px;
  color: #a09088;
}
.device span {
  line-height: 48px;
}
.device b {
  font-size: 36px;
  line-height: 52px;
  font-weight: 400;
  color: #20e428;
}
.home {
  width: 418px;
  height: 11px;
  margin: 0 auto;
  border-radius: 6px;
  background: #b2b2b2;
}
.stamp {
  position: absolute;
  right: 8px;
  bottom: 4px;
  width: 208px;
  height: 60px;
  color: #fff;
}
.brand {
  display: flex;
  align-items: center;
  gap: 8px;
  height: 40px;
  font-size: 33px;
  white-space: nowrap;
}
.brand-mini {
  font-size: 8px;
  fill: #fff;
}
.user {
  position: absolute;
  right: 0;
  bottom: 3px;
  display: flex;
  align-items: center;
  gap: 8px;
  font-size: 28px;
  line-height: 36px;
  white-space: nowrap;
}
.site {
  position: absolute;
  right: 0;
  bottom: -1px;
  font: 21px / 22px "DejaVu Sans", sans-serif;
}
</style>
